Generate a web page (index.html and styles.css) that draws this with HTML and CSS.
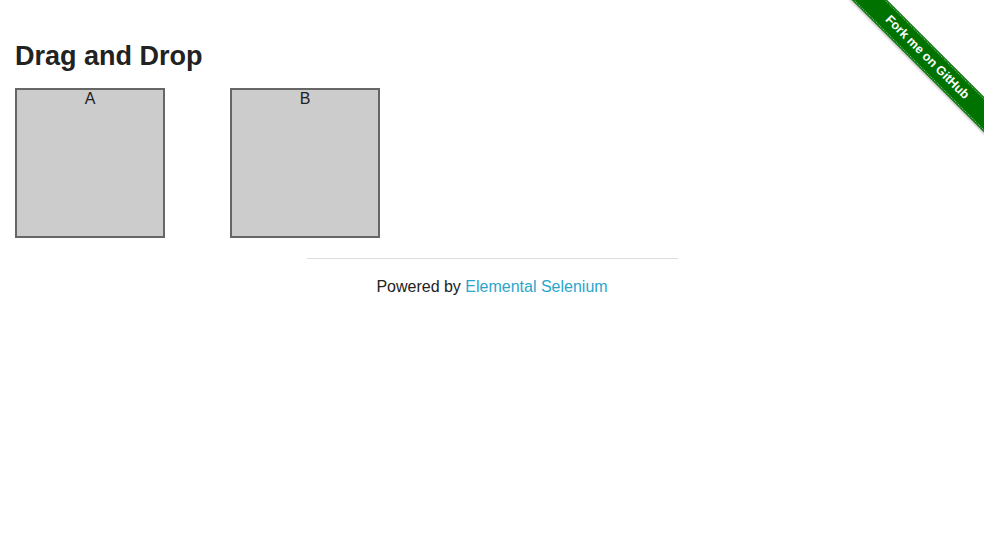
FILE: index.html
```html
<!DOCTYPE html>
<html>
<head>
<meta charset="utf-8">
<title>The Internet</title>
<link rel="stylesheet" href="styles.css">
</head>
<body>
<div class="ribbon-wrap"><a class="ribbon" href="#">Fork me on GitHub</a></div>
<div class="content">
  <h3 class="title">Drag and Drop</h3>
  <div class="columns">
    <div class="column"><header class="label">A</header></div>
    <div class="column"><header class="label">B</header></div>
  </div>
</div>
<div class="footer">
  <hr class="rule">
  <div class="powered">Powered by <a class="link" href="#">Elemental Selenium</a></div>
</div>
</body>
</html>
```
FILE: styles.css
```css
html, body {
  margin: 0;
  padding: 0;
  background: #fff;
}
body {
  font-family: "Liberation Sans", Arial, sans-serif;
  color: #222;
  font-size: 16px;
}
.content {
  padding: 0 15px;
}
.title {
  font-size: 27px;
  line-height: 33.75px;
  font-weight: bold;
  margin: 40px 0 14px;
  color: #222;
}
.columns {
  display: flex;
  gap: 65px;
}
.column {
  box-sizing: border-box;
  width: 150px;
  height: 150px;
  border: 2px solid #666;
  background: #ccc;
  text-align: center;
}
.label {
  line-height: normal;
}
.footer {
  width: 371px;
  margin: 20px auto 0;
}
.rule {
  border: 0;
  border-top: 1px solid #ddd;
  height: 0;
  margin: 0;
}
.powered {
  text-align: center;
  padding-top: 19px;
  line-height: normal;
}
.link {
  color: #2ba6cb;
  text-decoration: none;
}
.ribbon-wrap {
  position: absolute;
  top: 0;
  right: 0;
  width: 149px;
  height: 149px;
  overflow: hidden;
}
.ribbon {
  position: absolute;
  left: -18px;
  top: 46px;
  width: 220px;
  height: 23px;
  box-sizing: border-box;
  background: #007200;
  color: #fff;
  font-family: "Liberation Sans", Arial, sans-serif;
  font-weight: bold;
  font-size: 12.5px;
  line-height: 21px;
  text-align: center;
  text-decoration: none;
  transform: rotate(45deg);
  border-top: 1px dotted rgba(255,255,255,0.55);
  border-bottom: 1px dotted rgba(255,255,255,0.55);
  box-shadow: 0 0 0 1px #007200, 0 2px 3px rgba(0,0,0,0.35);
}
```
